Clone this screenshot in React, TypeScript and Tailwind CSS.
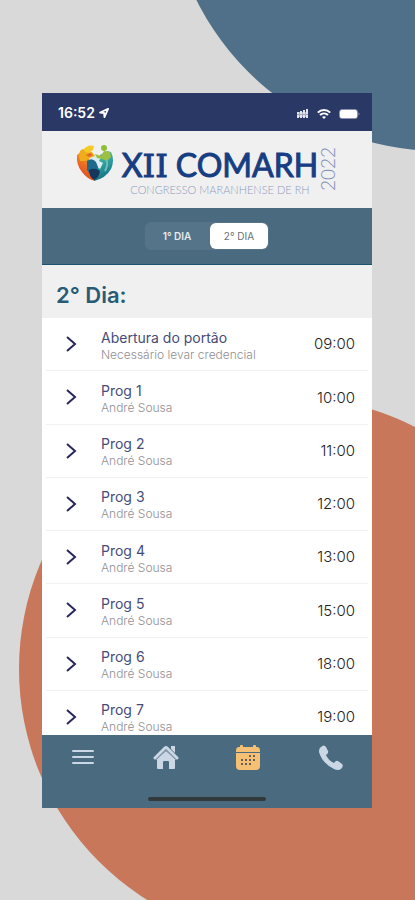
import React from "react";

type Session = { title: string; detail: string; time: string };

const sessions: Session[] = [
  { title: "Abertura do portão", detail: "Necessário levar credencial", time: "09:00" },
  { title: "Prog 1", detail: "André Sousa", time: "10:00" },
  { title: "Prog 2", detail: "André Sousa", time: "11:00" },
  { title: "Prog 3", detail: "André Sousa", time: "12:00" },
  { title: "Prog 4", detail: "André Sousa", time: "13:00" },
  { title: "Prog 5", detail: "André Sousa", time: "15:00" },
  { title: "Prog 6", detail: "André Sousa", time: "18:00" },
  { title: "Prog 7", detail: "André Sousa", time: "19:00" },
];

function Backdrop() {
  return (
    <svg className="absolute top-0 left-0" width="415" height="900" viewBox="0 0 415 900" aria-hidden="true">
      <circle cx="440" cy="-121" r="272" fill="#4f7088" />
      <circle cx="291" cy="669" r="272" fill="#c9775b" />
    </svg>
  );
}

function StatusBar() {
  return (
    <div className="flex h-[38px] items-center justify-between bg-[#2a3866] pr-3 pl-4 text-white">
      <div className="flex items-center gap-1 pt-px">
        <span className="text-sm leading-4 font-semibold">16:52</span>
        <svg width="10" height="10" viewBox="0 0 11 11" fill="none" stroke="currentColor" strokeWidth="2" strokeLinejoin="round" aria-hidden="true">
          <path d="M10 1 1.2 5 5.6 5.5 6 10Z" />
        </svg>
      </div>
      <div className="flex items-center gap-2 pt-1">
        <svg width="12" height="10" viewBox="0 0 12 10" fill="#e3e5ee" aria-hidden="true">
          <path d="M0 3h2v2H0zM3 2h2v3H3zM6 1h2v4H6zM9 0h2v5H9zM0 6h2v3H0zM3 6h2v3H3zM6 6h2v3H6zM9 6h2v3H9z" />
          <path d="M0 3h11v5H0z" opacity=".65" />
        </svg>
        <svg width="14" height="10" viewBox="0 0 14 10" fill="none" stroke="currentColor" strokeWidth="2" aria-hidden="true">
          <path d="M.8 3.6C4.3.2 9.7.2 13.2 3.6M3 6C5.3 3.9 8.700 3.900 11 6" />
          <path d="M5 8c1.200-1 2.800-1 4 0L7 10Z" fill="currentColor" stroke="none" />
        </svg>
        <svg width="21" height="10" viewBox="0 0 21 10" aria-hidden="true">
          <rect x=".5" y=".5" width="18" height="9" rx="2.500" fill="none" stroke="#8a92b0" />
          <rect x="1" y="1" width="17" height="8" rx="1.500" fill="#fff" />
          <path d="M19.500 3.500v3q1-.4 1-1.500t-1-1.500" fill="#8a92b0" />
        </svg>
      </div>
    </div>
  );
}

function Emblem() {
  return (
    <svg width="38" height="40" viewBox="0 0 38 40" aria-hidden="true">
      <defs>
        <linearGradient id="warm" x1="0" y1="1" x2=".4" y2="0">
          <stop offset="0" stopColor="#d93a21" />
          <stop offset=".6" stopColor="#ec6c24" />
          <stop offset="1" stopColor="#f2a51e" />
        </linearGradient>
        <linearGradient id="cool" x1="0" y1="0" x2=".3" y2="1">
          <stop offset="0" stopColor="#7fc48a" />
          <stop offset=".45" stopColor="#36a59f" />
          <stop offset="1" stopColor="#127286" />
        </linearGradient>
      </defs>
      <path d="M1 12Q0 22 6 29Q11 36 19 38Q18 31 20 25L18 15 12 11 5 9Z" fill="url(#warm)" />
      <path d="M18 38Q30 35 35 26Q39 17 35 9L31 8 24 12 20 20Z" fill="url(#cool)" />
      <path d="M13 15Q18 9 25 14L23 18 27 20 24 26 19 22 13 18Z" fill="#dcecf3" />
      <path d="M11 18Q16 14 20 19L22 24 21 30 14 31 11 27Z" fill="#1d6a8d" />
      <path d="M13 27Q19 24 24 28Q23 35 18 37Q13 34 13 27" fill="#17365c" />
      <path d="M3 13Q3 6 8 6L10 9 16 9 19 13 14 15 9 18 4 18Z" fill="#efac1d" />
      <path d="M8 6Q12 1 18 3L17 7 13 10 9 9Z" fill="#f4cb22" />
      <path d="M19 11 25 13 28 8 34 9 35 14 31 18 26 16 21 15Z" fill="#9cc043" />
      <circle cx="28" cy="5" r="3" fill="#8fbd35" />
      <path d="M10 12 14 10 17 12 13 14Z" fill="#e86325" />
      <path d="M30 17Q33 20 29 28" fill="none" stroke="#68c0bb" strokeWidth="2" />
    </svg>
  );
}

function Brand() {
  return (
    <header className="flex h-[77px] items-start justify-center bg-[#f0f0f0] pt-3">
      <Emblem />
      <div className="ml-2 flex flex-col items-center pt-1 font-['Lato',sans-serif]">
        <h1 className="flex items-baseline text-[32px] leading-9 text-[#173d82] [-webkit-text-stroke:1px_#173d82]">
          <span>X</span>
          <span className="mr-2 font-['DejaVu_Serif',serif]">II</span>
          <span>COMARH</span>
        </h1>
        <p className="text-[11px] leading-3 font-light whitespace-nowrap text-[#8d9bbd]">CONGRESSO MARANHENSE DE RH</p>
      </div>
      <span className="rotate-180 pb-1 font-['Lato',sans-serif] text-[19px] leading-5 font-light text-[#7c8fb7] [writing-mode:vertical-rl]">2022</span>
    </header>
  );
}

function DayTabs() {
  return (
    <div className="flex h-[57px] items-center justify-center border-b border-[#1c536e] bg-[#4a6a80]">
      <div className="flex h-7 w-[124px] rounded-md bg-[#567489]">
        <button type="button" className="w-16 text-[10px] font-semibold text-[#e5ebef]">1° DIA</button>
        <button type="button" aria-pressed="true" className="m-px flex-1 rounded-md bg-white text-[10px] text-[#667079]">2° DIA</button>
      </div>
    </div>
  );
}

function SessionRow({ title, detail, time }: Session) {
  return (
    <li className="mx-1 flex items-center border-b border-[#f1f1f3]">
      <button type="button" className="flex w-full items-center pr-[13px] pl-5 text-left">
        <svg width="11" height="16" viewBox="0 0 11 16" fill="none" stroke="#29265e" strokeWidth="2" aria-hidden="true">
          <path d="m1 1 8 7-8 7" />
        </svg>
        <span className="ml-6 flex flex-1 flex-col pt-[3px]">
          <span className="text-sm leading-[18px] text-[#464c78]">{title}</span>
          <span className="text-xs leading-4 font-light text-[#8f8f93]">{detail}</span>
        </span>
        <span className="pt-px text-[15px] font-light text-[#222222]">{time}</span>
      </button>
    </li>
  );
}

function BottomNav() {
  return (
    <nav className="h-[73px] bg-[#4a6a80] text-[#cbd7e5]">
      <div className="grid h-11 grid-cols-4 place-items-center">
        <button type="button" aria-label="Menu">
          <svg width="22" height="14" viewBox="0 0 22 14" stroke="currentColor" strokeWidth="2" strokeLinecap="round" aria-hidden="true">
            <path d="M1 1h20M1 7h20M1 13h20" />
          </svg>
        </button>
        <button type="button" aria-label="Início">
          <svg width="26" height="25" viewBox="0 0 26 25" fill="currentColor" aria-hidden="true">
            <path d="M18 1h4v7l-4-4Z" />
            <path d="M13 6 22 14v9q0 1-1 1h-5v-7q0-1-1-1h-4q-1 0-1 1v7H5q-1 0-1-1v-9Z" />
            <path d="M2 13 12 3q1-1 2 0l10 10" fill="none" stroke="currentColor" strokeWidth="3" strokeLinecap="round" />
            <path d="M3 15 13 5l10 10" fill="none" stroke="#7e96aa" strokeWidth="1" />
          </svg>
        </button>
        <button type="button" aria-label="Programação" aria-current="page">
          <svg width="24" height="25" viewBox="0 0 24 25" fill="#f5bf74" aria-hidden="true">
            <path d="M0 6q0-4 3-4h1V1q0-1 1-1h1q1 0 1 1v1h10V1q0-1 1-1h1q1 0 1 1v1h1q3 0 3 4v1H0ZM0 8h24v13q0 4-4 4H4q-4 0-4-4Z" />
            <path d="M13 10h2v2h-2zM17 10h2v2h-2zM5 14h2v2H5zM9 14h2v2H9zM13 14h2v2h-2zM17 14h2v2h-2zM5 18h2v2H5zM9 18h2v2H9zM13 18h2v2h-2z" fill="#655f59" />
          </svg>
        </button>
        <button type="button" aria-label="Telefone">
          <svg width="24" height="25" viewBox="0 0 24 25" fill="currentColor" aria-hidden="true">
            <path d="M2 2Q5-1 7 2l2 4q1 2-2 4 2 5 8 8 2-3 4-2l4 3q2 2-1 5-3 2-7 0Q3 18 0 7 0 3 2 2Z" />
          </svg>
        </button>
      </div>
      <div className="mx-auto mt-[18px] h-1 w-[118px] rounded-full bg-[#33383b]" />
    </nav>
  );
}

export default function App() {
  return (
    <div className="relative min-h-[900px] overflow-hidden bg-[#d9d9d9] pt-[93px] pr-[43px] pb-[92px] pl-[42px] font-['Inter',sans-serif]">
      <Backdrop />
      <main className="relative bg-[#f0f0f0]">
        <StatusBar />
        <Brand />
        <DayTabs />
        <section>
          <h2 className="flex h-[53px] items-center px-[14px] pt-2 text-[22px] font-semibold text-[#285b75]">2° Dia:</h2>
          <div className="h-[417px] overflow-hidden bg-white">
            <ul className="grid h-[426px] grid-rows-8">
              {sessions.map((session) => (
                <SessionRow key={session.time} {...session} />
              ))}
            </ul>
          </div>
        </section>
        <BottomNav />
      </main>
    </div>
  );
}
